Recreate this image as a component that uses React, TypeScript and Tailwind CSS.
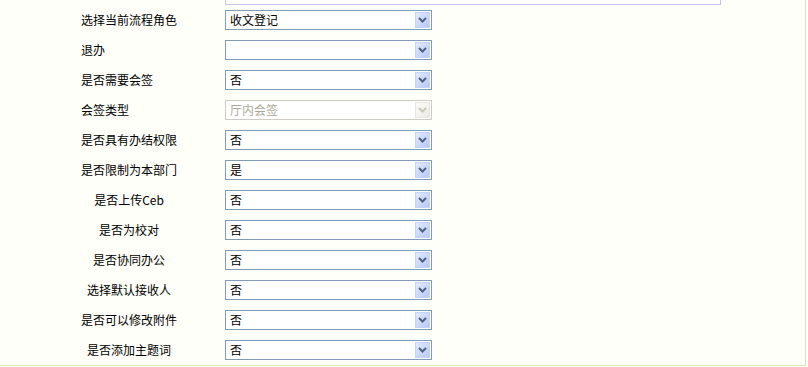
import React from "react";

type Row = { label: string; value: string; align: "left" | "center"; disabled?: boolean };

const rows: Row[] = [
  { label: "选择当前流程角色", value: "收文登记", align: "left" },
  { label: "退办", value: "", align: "left" },
  { label: "是否需要会签", value: "否", align: "left" },
  { label: "会签类型", value: "厅内会签", align: "left", disabled: true },
  { label: "是否具有办结权限", value: "否", align: "left" },
  { label: "是否限制为本部门", value: "是", align: "left" },
  { label: "是否上传Ceb", value: "否", align: "center" },
  { label: "是否为校对", value: "否", align: "center" },
  { label: "是否协同办公", value: "否", align: "center" },
  { label: "选择默认接收人", value: "否", align: "center" },
  { label: "是否可以修改附件", value: "否", align: "center" },
  { label: "是否添加主题词", value: "否", align: "center" },
];

function Chevron({ color }: { color: string }) {
  return (
    <svg width="9" height="6" viewBox="0 0 9 6">
      <path d="M1 1 L4.5 4.5 L8 1" fill="none" stroke={color} strokeWidth="2" />
    </svg>
  );
}

function Select({ value, disabled }: { value: string; disabled?: boolean }) {
  return (
    <div
      className={
        "flex h-[20px] w-[207px] items-center border bg-white p-px " +
        (disabled ? "border-[#cdcbc3]" : "border-[#7f9db9]")
      }
    >
      <span
        className={
          "flex-1 pl-[3px] text-[12px] leading-[18px] " +
          (disabled ? "text-[#aca899]" : "text-black")
        }
      >
        {value}
      </span>
      {disabled ? (
        <div className="flex h-[16px] w-[15px] items-center justify-center border border-[#e8e6df] bg-[linear-gradient(135deg,#fbfbf9,#ecebe6)]">
          <Chevron color="#c9c7ba" />
        </div>
      ) : (
        <div className="flex h-[16px] w-[15px] items-center justify-center border border-[#c3d3fd] bg-[linear-gradient(135deg,#e1eafe,#b7c9f6)]">
          <Chevron color="#4d6185" />
        </div>
      )}
    </div>
  );
}

export default function App() {
  return (
    <div
      className="h-[367px] w-[808px] bg-white"
      style={{ fontFamily: '"Noto Sans CJK SC", "Liberation Sans", sans-serif' }}
    >
      <div className="h-[366px] w-[806px] border-r border-b border-[#d6eab8] bg-[#fefff9]">
        <div className="ml-[225px] h-[5px] w-[496px] border-x border-b border-[#c8c2e4] bg-white" />
        <div className="mt-[5px] flex flex-col gap-[10px]">
          {rows.map((r, i) => (
            <div key={i} className="flex h-[20px] items-center">
              <div
                className={
                  "ml-[81px] w-[96px] whitespace-nowrap text-[12px] leading-[14px] text-black " +
                  (r.align === "center" ? "text-center" : "text-left")
                }
              >
                {r.label}
              </div>
              <div className="ml-[48px]">
                <Select value={r.value} disabled={r.disabled} />
              </div>
            </div>
          ))}
        </div>
      </div>
    </div>
  );
}
